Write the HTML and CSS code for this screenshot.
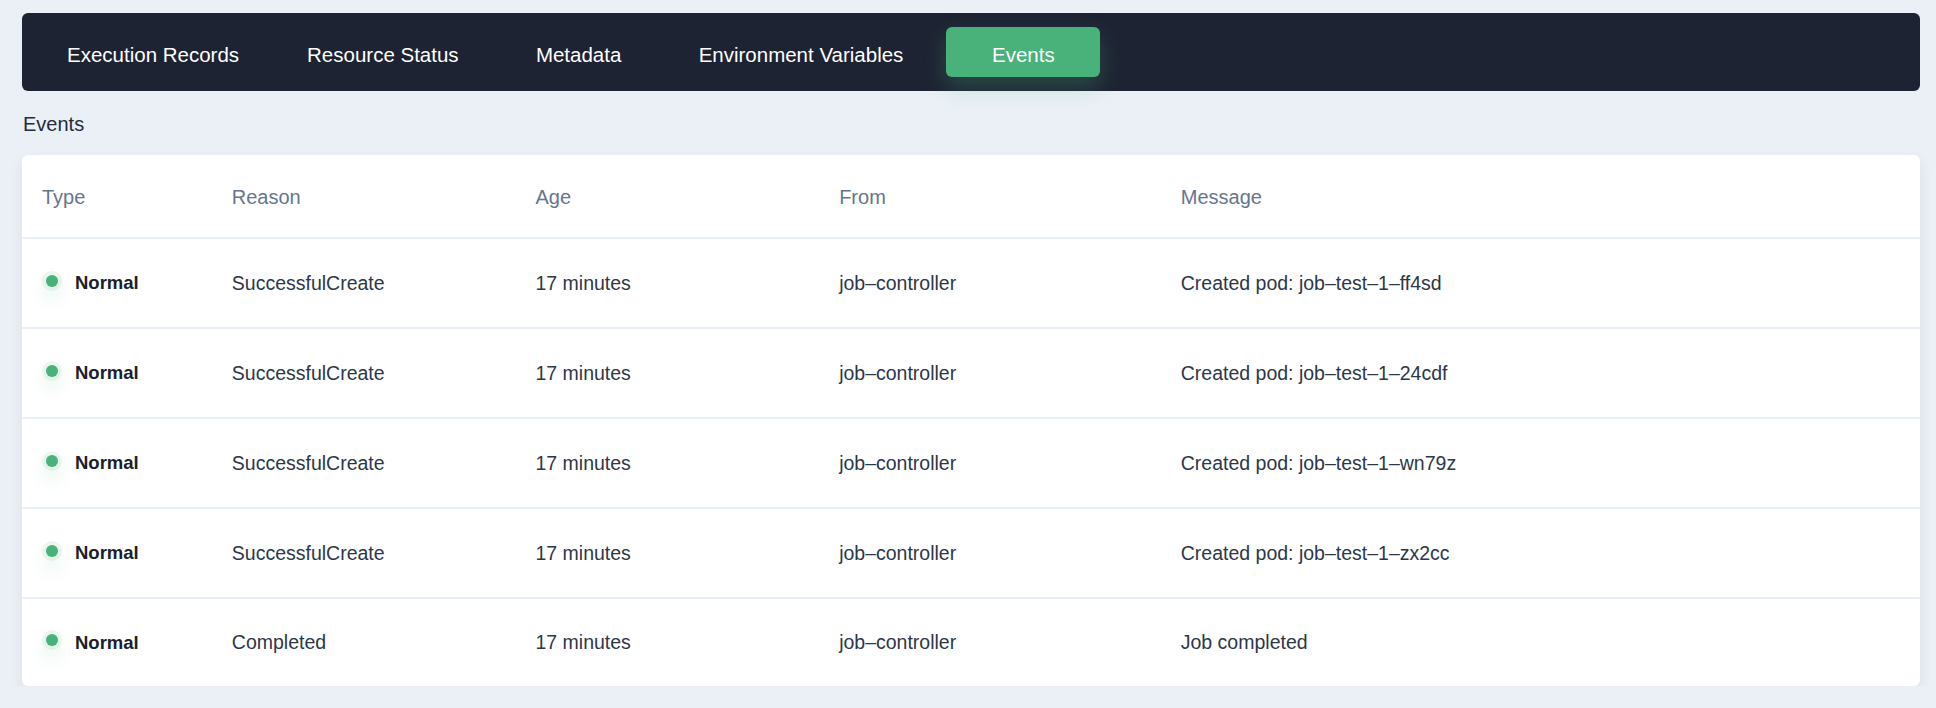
FILE: index.html
```html
<!DOCTYPE html>
<html lang="en">
<head>
<meta charset="utf-8">
<title>Job Events</title>
<link rel="stylesheet" href="styles.css">
</head>
<body>
<div class="page">
  <nav class="tabs">
    <a class="tab tab-first">Execution Records</a>
    <a class="tab">Resource Status</a>
    <a class="tab">Metadata</a>
    <a class="tab">Environment Variables</a>
    <a class="tab tab-active">Events</a>
  </nav>
  <h2 class="section-title">Events</h2>
  <div class="card">
    <table class="events">
      <colgroup>
        <col class="c-type"><col class="c-reason"><col class="c-age"><col class="c-from"><col class="c-msg">
      </colgroup>
      <thead>
        <tr><th>Type</th><th>Reason</th><th>Age</th><th>From</th><th>Message</th></tr>
      </thead>
      <tbody>
        <tr><td><span class="type"><span class="dot"></span>Normal</span></td><td>SuccessfulCreate</td><td>17 minutes</td><td>job–controller</td><td>Created pod: job–test–1–ff4sd</td></tr>
        <tr><td><span class="type"><span class="dot"></span>Normal</span></td><td>SuccessfulCreate</td><td>17 minutes</td><td>job–controller</td><td>Created pod: job–test–1–24cdf</td></tr>
        <tr><td><span class="type"><span class="dot"></span>Normal</span></td><td>SuccessfulCreate</td><td>17 minutes</td><td>job–controller</td><td>Created pod: job–test–1–wn79z</td></tr>
        <tr><td><span class="type"><span class="dot"></span>Normal</span></td><td>SuccessfulCreate</td><td>17 minutes</td><td>job–controller</td><td>Created pod: job–test–1–zx2cc</td></tr>
        <tr class="last"><td><span class="type"><span class="dot"></span>Normal</span></td><td>Completed</td><td>17 minutes</td><td>job–controller</td><td>Job completed</td></tr>
      </tbody>
    </table>
  </div>
</div>
</body>
</html>
```

FILE: styles.css
```css
* { box-sizing: border-box; }

html, body {
  margin: 0;
  background: #ebf0f6;
}

body {
  font-family: "Liberation Sans", Arial, sans-serif;
  color: #2d3748;
}

.page {
  padding: 13px 16px 0 22px;
}

.tabs {
  display: flex;
  align-items: center;
  gap: 9px;
  height: 78px;
  padding: 0 11px;
  background: #1e2333;
  border-radius: 6px;
}

.tab {
  display: flex;
  align-items: center;
  justify-content: center;
  min-width: 154px;
  height: 50px;
  padding: 5px 34px 0;
  font-size: 20.5px;
  color: #ffffff;
  border-radius: 6px;
  white-space: nowrap;
}

.tab-first {
  padding-right: 25px;
}

.tab-active {
  background: #48b27a;
  box-shadow: 0 10px 22px rgba(72, 178, 122, 0.28);
}

.section-title {
  margin: 0;
  height: 64px;
  padding: 2px 0 0 1px;
  line-height: 62px;
  font-size: 20px;
  font-weight: normal;
  color: #232c3b;
}

.card {
  background: #ffffff;
  border-radius: 6px;
  box-shadow: 0 6px 14px rgba(45, 55, 72, 0.08);
  overflow: hidden;
}

.events {
  width: 100%;
  border-collapse: collapse;
  table-layout: fixed;
}

.c-type { width: 10%; }
.c-reason { width: 16%; }
.c-age { width: 16%; }
.c-from { width: 18%; }
.c-msg { width: 40%; }

.events th {
  height: 83px;
  padding: 3px 20px 0;
  text-align: left;
  font-weight: normal;
  font-size: 20px;
  color: #66768d;
  border-bottom: 2px solid #e9eff6;
}

.events td {
  height: 90px;
  padding: 0 20px;
  font-size: 19.5px;
  color: #2d3748;
  border-bottom: 2px solid #e9eff6;
  white-space: nowrap;
}

.events tr.last td {
  border-bottom: none;
  height: 88px;
}

.type {
  display: flex;
  align-items: center;
  font-weight: bold;
  font-size: 18.5px;
  color: #1a202c;
}

.dot {
  width: 12px;
  height: 12px;
  margin: 0 17px 5px 4px;
  border-radius: 50%;
  background: #48b27a;
  box-shadow: 0 0 0 4px rgba(72, 178, 122, 0.1), 0 10px 18px rgba(72, 178, 122, 0.3);
}
```
